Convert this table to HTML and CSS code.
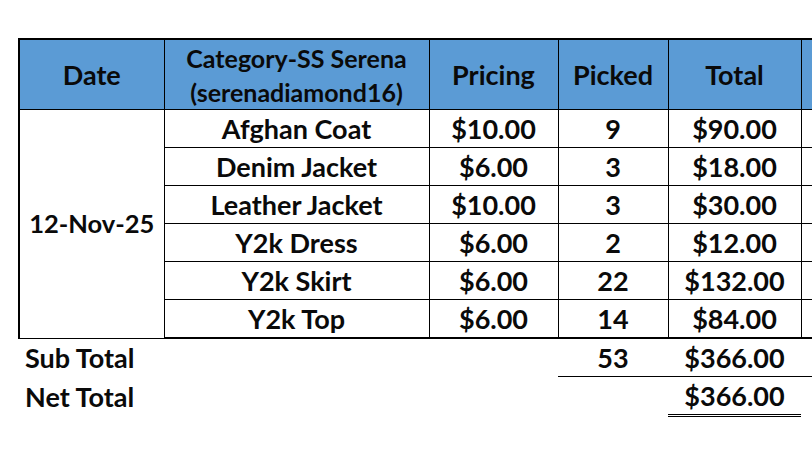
FILE: index.html
```html
<!DOCTYPE html>
<html>
<head>
<meta charset="utf-8">
<link rel="stylesheet" href="styles.css">
</head>
<body>
<div class="sheet">
<table class="report">
  <colgroup>
    <col class="c-date"><col class="c-cat"><col class="c-price"><col class="c-picked"><col class="c-total"><col class="c-extra">
  </colgroup>
  <thead>
    <tr>
      <th>Date</th>
      <th class="cat">Category-SS Serena<br>(serenadiamond16)</th>
      <th>Pricing</th>
      <th>Picked</th>
      <th>Total</th>
      <th class="extra"></th>
    </tr>
  </thead>
  <tbody class="items">
    <tr>
      <td class="date" rowspan="6">12-Nov-25</td>
      <td>Afghan Coat</td><td>$10.00</td><td>9</td><td>$90.00</td><td class="extra"></td>
    </tr>
    <tr><td>Denim Jacket</td><td>$6.00</td><td>3</td><td>$18.00</td><td class="extra"></td></tr>
    <tr><td>Leather Jacket</td><td>$10.00</td><td>3</td><td>$30.00</td><td class="extra"></td></tr>
    <tr><td>Y2k Dress</td><td>$6.00</td><td>2</td><td>$12.00</td><td class="extra"></td></tr>
    <tr><td>Y2k Skirt</td><td>$6.00</td><td>22</td><td>$132.00</td><td class="extra"></td></tr>
    <tr class="last"><td>Y2k Top</td><td>$6.00</td><td>14</td><td>$84.00</td><td class="extra"></td></tr>
  </tbody>
  <tbody class="sums">
    <tr class="sub">
      <td class="label">Sub Total</td><td></td><td></td>
      <td class="ul">53</td><td class="ul">$366.00</td><td class="ul"></td>
    </tr>
    <tr class="net">
      <td class="label">Net Total</td><td></td><td></td><td></td>
      <td class="dbl">$366.00</td><td></td>
    </tr>
  </tbody>
</table>
</div>
</body>
</html>
```

FILE: styles.css
```css
html, body {
  margin: 0;
  padding: 0;
  background: #ffffff;
}
body {
  width: 812px;
  height: 454px;
  overflow: hidden;
}
.sheet {
  padding: 38px 0 0 18px;
}
.report {
  border-collapse: collapse;
  table-layout: fixed;
  width: 794px;
  font-family: "Lato", "Open Sans", sans-serif;
  font-weight: 700;
  font-size: 27px;
  color: #0a0a0a;
}
.c-date { width: 145px; }
.c-cat { width: 265px; }
.c-price { width: 129px; }
.c-picked { width: 110px; }
.c-total { width: 133px; }
.c-extra { width: 12px; }

.report th {
  background: #5b9bd5;
  height: 69px;
  padding: 0;
  border: 1px solid #000;
  border-top: 2px solid #000;
  border-bottom: 1px solid #000;
  line-height: 34px;
  font-weight: 700;
  text-align: center;
  vertical-align: middle;
  white-space: nowrap;
}
.report th.cat { font-size: 25px; }
.report th:first-child { border-left: 2px solid #000; }
.report th.extra,
.items td.extra { border-right: 0; }

.items td {
  height: 37px;
  padding: 0;
  border: 1px solid #000;
  text-align: center;
  vertical-align: middle;
  line-height: 37px;
  white-space: nowrap;
}
.items td.date {
  border-left: 2px solid #000;
  font-size: 25.5px;
}
.items tr.last td { border-bottom: 2px solid #000; }

.sums td {
  height: 37px;
  padding: 0;
  text-align: center;
  vertical-align: middle;
  line-height: 37px;
  white-space: nowrap;
}
.sums td.label {
  text-align: left;
  padding-left: 6px;
}
.sums td.ul { border-bottom: 1px solid #000; }
.sums td.dbl { border-bottom: 3px double #000; }
```
